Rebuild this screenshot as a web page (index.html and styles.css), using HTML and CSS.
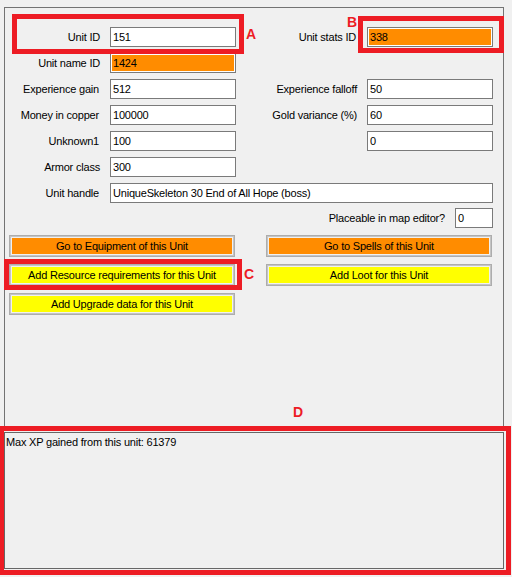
FILE: index.html
```html
<!DOCTYPE html>
<html>
<head>
<meta charset="utf-8">
<link rel="stylesheet" href="styles.css">
</head>
<body>
<div class="panel">
  <div class="fields">
    <label class="lbl">Unit ID</label><input class="tb" value="151" readonly>
    <label class="lbl">Unit stats ID</label><input class="tb orange" value="338" readonly>

    <label class="lbl">Unit name ID</label><input class="tb orange" value="1424" readonly>
    <span></span><span></span>

    <label class="lbl">Experience gain</label><input class="tb" value="512" readonly>
    <label class="lbl">Experience falloff</label><input class="tb" value="50" readonly>

    <label class="lbl">Money in copper</label><input class="tb" value="100000" readonly>
    <label class="lbl">Gold variance (%)</label><input class="tb" value="60" readonly>

    <label class="lbl">Unknown1</label><input class="tb" value="100" readonly>
    <span></span><input class="tb" value="0" readonly>

    <label class="lbl">Armor class</label><input class="tb" value="300" readonly>
    <span></span><span></span>

    <label class="lbl">Unit handle</label><input class="tb wide" value="UniqueSkeleton 30 End of All Hope (boss)" readonly>
  </div>
  <div class="placeable">
    <label class="lbl-plain">Placeable in map editor?</label><input class="tb small" value="0" readonly>
  </div>
  <div class="buttons">
    <button class="btn orange-btn">Go to Equipment of this Unit</button>
    <button class="btn orange-btn">Go to Spells of this Unit</button>
    <button class="btn yellow-btn">Add Resource requirements for this Unit</button>
    <button class="btn yellow-btn">Add Loot for this Unit</button>
    <button class="btn yellow-btn">Add Upgrade data for this Unit</button>
  </div>
</div>
<div class="output">Max XP gained from this unit: 61379</div>

<div class="mark mark-a"></div>
<div class="mark mark-b"></div>
<div class="mark mark-c"></div>
<div class="mark mark-d"></div>
<span class="tag tag-a">A</span>
<span class="tag tag-b">B</span>
<span class="tag tag-c">C</span>
<span class="tag tag-d">D</span>
</body>
</html>
```
FILE: styles.css
```css
html, body {
  margin: 0;
  padding: 0;
  background: #f0f0f0;
}
body {
  position: relative;
  width: 512px;
  height: 577px;
  overflow: hidden;
  padding: 7px 0 0 4px;
  box-sizing: border-box;
  font-family: "Liberation Sans", Arial, sans-serif;
  font-size: 11px;
  letter-spacing: -0.2px;
  color: #000;
}
.panel {
  width: 500px;
  height: 422px;
  box-sizing: border-box;
  border: 1px solid #737373;
  padding-top: 19px;
}
.fields {
  display: grid;
  grid-template-columns: 105px 126px 131px 126px;
  grid-auto-rows: 20px;
  row-gap: 6px;
}
.lbl {
  text-align: right;
  padding-right: 10px;
  line-height: 20px;
  white-space: nowrap;
}
.fields .lbl:nth-of-type(even) {
  padding-right: 11px;
}
.tb {
  box-sizing: border-box;
  height: 20px;
  margin: 0;
  border: 1px solid #7a7a7a;
  padding: 0 2px;
  background: #fff;
  font: inherit;
  letter-spacing: inherit;
  color: #000;
  outline: none;
  min-width: 0;
  width: 100%;
}
.orange {
  background: #ff8c00;
  box-shadow: inset 0 0 0 1px #fff;
}
.wide {
  grid-column: 2 / 5;
}
.placeable {
  display: flex;
  justify-content: flex-end;
  align-items: center;
  gap: 10px;
  width: 488px;
  height: 20px;
  margin-top: 5px;
}
.lbl-plain {
  white-space: nowrap;
}
.small {
  width: 38px;
}
.buttons {
  display: grid;
  grid-template-columns: 226px 226px;
  grid-auto-rows: 22px;
  column-gap: 31px;
  row-gap: 7px;
  padding-left: 4px;
  margin-top: 7px;
}
.btn {
  box-sizing: border-box;
  margin: 0;
  padding: 0 0 0 0;
  height: 22px;
  border: 1px solid #adadad;
  box-shadow: inset 0 0 0 1px #c4c4c4, inset 0 0 0 2px #f0f0f0;
  font: inherit;
  letter-spacing: inherit;
  color: #000;
  line-height: 20px;
  text-align: center;
}
.orange-btn { background: #ff8c00; }
.yellow-btn { background: #ffff00; }

.output {
  box-sizing: border-box;
  width: 500px;
  height: 137px;
  margin-top: 3px;
  border: 1px solid #666;
  padding: 3px 1px;
  line-height: 13px;
}

.mark {
  position: absolute;
  box-sizing: border-box;
  border: 5px solid #ed1c24;
}
.mark-a { left: 12px; top: 14px; width: 232px; height: 40px; }
.mark-b { left: 358px; top: 16px; width: 146px; height: 37px; }
.mark-c { left: 4px; top: 259px; width: 238px; height: 31px; }
.mark-d { left: -1px; top: 426px; width: 512px; height: 149px; }

.tag {
  position: absolute;
  font-family: "Liberation Sans", Arial, sans-serif;
  font-weight: bold;
  font-size: 14px;
  line-height: 14px;
  letter-spacing: 0;
  color: #ed1c24;
}
.tag-a { left: 246px; top: 27px; }
.tag-b { left: 347px; top: 15px; }
.tag-c { left: 244px; top: 267px; }
.tag-d { left: 293px; top: 405px; }
```
